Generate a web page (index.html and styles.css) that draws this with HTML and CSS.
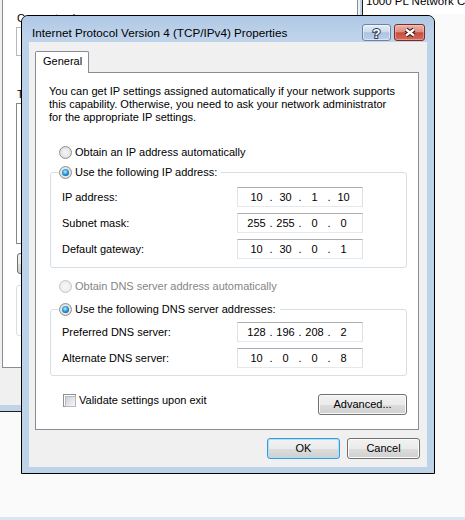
FILE: index.html
```html
<!DOCTYPE html>
<html>
<head>
<meta charset="utf-8">
<title>Internet Protocol Version 4 (TCP/IPv4) Properties</title>
<link rel="stylesheet" href="styles.css">
</head>
<body>
<div class="desktop">
  <div class="netwin"><span class="netwin-text">1000 PL Network Connection</span></div>

  <div class="bgwin">
    <div class="bg-client">
      <div class="bg-panel">
        <div class="bg-label bg-label-connect">Connect using:</div>
        <div class="bg-adapter"></div>
        <div class="bg-label bg-label-items">This connection uses the following items:</div>
        <div class="bg-list"></div>
        <div class="bg-buttons"><span class="bg-btn"></span></div>
        <div class="bg-desc"></div>
      </div>
    </div>
  </div>

  <div class="dialog">
    <div class="titlebar">
      <div class="title">Internet Protocol Version 4 (TCP/IPv4) Properties</div>
      <div class="tb-buttons">
        <span class="tb-btn tb-help">
          <svg width="13" height="14" viewBox="0 0 13 14"><text x="6.5" y="12" text-anchor="middle" font-family="Liberation Sans, sans-serif" font-weight="bold" font-size="13" fill="#ffffff" stroke="#2b3f5c" stroke-width="2" paint-order="stroke">?</text></svg>
        </span>
        <span class="tb-btn tb-close">
          <svg width="14" height="11" viewBox="0 0 14 11"><path d="M3 2.5 L11 8.5 M11 2.5 L3 8.5" stroke="#3a120d" stroke-width="4.6" fill="none"/><path d="M3 2.5 L11 8.5 M11 2.5 L3 8.5" stroke="#ffffff" stroke-width="2.2" fill="none"/></svg>
        </span>
      </div>
    </div>

    <div class="client">
      <div class="tab">General</div>
      <div class="panel">
        <div class="intro">You can get IP settings assigned automatically if your network supports<br>this capability. Otherwise, you need to ask your network administrator<br>for the appropriate IP settings.</div>

        <div class="option option-first"><span class="radio"></span><span class="option-text">Obtain an IP address automatically</span></div>

        <fieldset class="group group-ip">
          <legend class="group-legend"><span class="radio checked"></span><span class="option-text">Use the following IP address:</span></legend>
          <div class="group-body group-body-ip">
            <div class="field-row">
              <span class="field-label">IP address:</span>
              <span class="ipbox"><span class="oct">10</span><span class="dot">.</span><span class="oct">30</span><span class="dot">.</span><span class="oct">1</span><span class="dot">.</span><span class="oct">10</span></span>
            </div>
            <div class="field-row">
              <span class="field-label">Subnet mask:</span>
              <span class="ipbox"><span class="oct">255</span><span class="dot">.</span><span class="oct">255</span><span class="dot">.</span><span class="oct">0</span><span class="dot">.</span><span class="oct">0</span></span>
            </div>
            <div class="field-row">
              <span class="field-label">Default gateway:</span>
              <span class="ipbox"><span class="oct">10</span><span class="dot">.</span><span class="oct">30</span><span class="dot">.</span><span class="oct">0</span><span class="dot">.</span><span class="oct">1</span></span>
            </div>
          </div>
        </fieldset>

        <div class="option option-dns disabled"><span class="radio"></span><span class="option-text">Obtain DNS server address automatically</span></div>

        <fieldset class="group group-dns">
          <legend class="group-legend"><span class="radio checked"></span><span class="option-text">Use the following DNS server addresses:</span></legend>
          <div class="group-body group-body-dns">
            <div class="field-row">
              <span class="field-label">Preferred DNS server:</span>
              <span class="ipbox"><span class="oct">128</span><span class="dot">.</span><span class="oct">196</span><span class="dot">.</span><span class="oct">208</span><span class="dot">.</span><span class="oct">2</span></span>
            </div>
            <div class="field-row">
              <span class="field-label">Alternate DNS server:</span>
              <span class="ipbox"><span class="oct">10</span><span class="dot">.</span><span class="oct">0</span><span class="dot">.</span><span class="oct">0</span><span class="dot">.</span><span class="oct">8</span></span>
            </div>
          </div>
        </fieldset>

        <div class="check-row">
          <label class="check"><span class="checkbox"></span><span class="check-text">Validate settings upon exit</span></label>
          <span class="btn btn-advanced">Advanced...</span>
        </div>
      </div>

      <div class="dialog-buttons">
        <span class="btn btn-default">OK</span>
        <span class="btn">Cancel</span>
      </div>
    </div>
  </div>

  <div class="desktop-fill"></div>
  <div class="taskbar-edge"></div>
</div>
</body>
</html>
```

FILE: styles.css
```css
* { box-sizing: border-box; }

html, body {
  margin: 0;
  padding: 0;
}

body {
  font-family: "Liberation Sans", Arial, sans-serif;
  font-size: 11px;
  line-height: 13px;
  color: #000;
  background: #fafafa;
}

.desktop {
  position: relative;
  width: 465px;
  height: 520px;
  overflow: hidden;
  display: flex;
  flex-direction: column;
  background: #fafafa;
}

.desktop-fill { flex: 1; }

.taskbar-edge {
  height: 3px;
  background: #dae6f3;
}

/* window behind, top right */
.netwin {
  position: absolute;
  left: 363px;
  top: -30px;
  width: 110px;
  height: 44px;
  background: #ffffff;
  padding: 25px 0 0 3px;
  font-size: 11.5px;
  white-space: nowrap;
  z-index: 0;
}

/* background property window */
.bgwin {
  position: absolute;
  left: -20px;
  top: -40px;
  width: 383px;
  height: 452px;
  border: 1px solid #1e1e1e;
  background: #bfd4eb;
  padding: 0 2px 6px 7px;
  display: flex;
  flex-direction: column;
  z-index: 1;
}

.bg-client {
  flex: 1;
  background: #f0f0f0;
  padding: 0 2px 37px 14px;
  display: flex;
  flex-direction: column;
}

.bg-panel {
  flex: 1;
  background: #ffffff;
  border: 1px solid #898c95;
  padding: 0 12px 0 13px;
  display: flex;
  flex-direction: column;
}

.bg-label {
  padding-left: 1px;
  white-space: nowrap;
}

.bg-label-connect { margin-top: 50px; }

.bg-adapter {
  margin-top: 2px;
  height: 29px;
  border: 1px solid #b5b8be;
  background: #ffffff;
}

.bg-label-items { margin-top: 32px; }

.bg-list {
  margin-top: 2px;
  height: 141px;
  border: 1px solid #828790;
  background: #ffffff;
}

.bg-buttons {
  margin-top: 9px;
  height: 21px;
  display: flex;
}

.bg-btn {
  margin-left: 1px;
  width: 80px;
  height: 21px;
  border: 1px solid #707070;
  border-radius: 3px;
  background: linear-gradient(#f2f2f2 0%, #ebebeb 50%, #dddddd 51%, #cfcfcf 100%);
}

.bg-desc {
  margin-top: 11px;
  height: 51px;
  border: 1px solid #d5dfe5;
  border-radius: 3px;
}

/* dialog */
.dialog {
  position: absolute;
  left: 21px;
  top: 15px;
  width: 414px;
  height: 459px;
  border: 1px solid #000000;
  border-radius: 7px 7px 0 0;
  background: #bdd3ea;
  display: flex;
  flex-direction: column;
  overflow: hidden;
  z-index: 2;
}

.titlebar {
  height: 26px;
  flex: none;
  display: flex;
  align-items: flex-start;
  padding: 8px 9px 0 10px;
  background: linear-gradient(#afc7e4 0%, #bbd1ea 60%, #bfd4eb 100%);
  border-radius: 6px 6px 0 0;
}

.title {
  flex: 1;
  margin-top: 2px;
  font-size: 11.7px;
  line-height: 14px;
  white-space: nowrap;
}

.tb-buttons {
  display: flex;
  gap: 3px;
}

.tb-btn {
  height: 17px;
  border: 1px solid;
  border-radius: 3px;
  display: flex;
  align-items: center;
  justify-content: center;
}

.tb-help {
  width: 29px;
  border-color: #6c83a3;
  background: linear-gradient(#e4edf8 0%, #cddbec 45%, #aec3df 52%, #bcd0e8 100%);
  box-shadow: inset 0 0 0 1px rgba(255, 255, 255, 0.45);
}

.tb-close {
  width: 31px;
  border-color: #7a2c24;
  background: linear-gradient(#ebb5aa 0%, #de8d80 45%, #c84c3e 52%, #d26d5c 100%);
  box-shadow: inset 0 0 0 1px rgba(255, 220, 210, 0.4);
}

.tb-btn svg { display: block; }

.client {
  flex: 1;
  margin: 0 7px 6px;
  background: #f0f0f0;
  padding: 9px 7px 8px 6px;
  display: flex;
  flex-direction: column;
}

.tab {
  align-self: flex-start;
  position: relative;
  z-index: 1;
  width: 54px;
  height: 22px;
  margin-bottom: -1px;
  border: 1px solid #898c95;
  border-bottom: 0;
  border-radius: 2px 2px 0 0;
  background: #ffffff;
  padding: 3px 0 0 7px;
}

.panel {
  flex: 1;
  margin-right: 1px;
  border: 1px solid #898c95;
  background: #ffffff;
  padding: 12px 11px 14px 14px;
  display: flex;
  flex-direction: column;
}

.intro {
  margin-left: -1px;
  white-space: nowrap;
}

.option {
  display: flex;
  align-items: center;
  height: 13px;
  padding-left: 9px;
  white-space: nowrap;
}

.option-first { margin-top: 22px; }
.option-dns { margin-top: 12px; }

.option-text { margin-left: 3px; }

.disabled { color: #858585; }

.radio {
  width: 13px;
  height: 13px;
  flex: none;
  border-radius: 50%;
  border: 1px solid #8e8f8f;
  background: radial-gradient(circle at 50% 50%, #f6f6f6 0%, #e6e6e6 55%, #cfcfcf 100%);
  display: flex;
  align-items: center;
  justify-content: center;
}

.radio.checked::after {
  content: "";
  width: 7px;
  height: 7px;
  border-radius: 50%;
  background: radial-gradient(circle at 45% 40%, #c6f2ff 0%, #47b6ec 32%, #1a6cb2 68%, #163f6b 100%);
}

.disabled .radio {
  border-color: #c6c6c6;
  background: radial-gradient(circle at 50% 50%, #f8f8f8 0%, #eeeeee 60%, #e2e2e2 100%);
}

.group {
  margin: 0;
  padding: 0;
  min-width: 0;
  border: 1px solid #d5dfe5;
  border-radius: 3px;
}

.group-ip { margin-top: 7px; }
.group-dns { margin-top: 10px; }

.group-legend {
  display: flex;
  align-items: center;
  height: 13px;
  margin-left: 8px;
  padding: 0 4px 0 0;
  white-space: nowrap;
}

.group-body {
  display: flex;
  flex-direction: column;
  gap: 6px;
}

.group-body-ip { padding: 8px 0 8px 0; }
.group-body-dns { padding: 6px 0 7px 0; }

.field-row {
  display: flex;
  align-items: center;
  padding-left: 11px;
}

.field-label {
  width: 175px;
  flex: none;
  white-space: nowrap;
}

.ipbox {
  width: 126px;
  height: 20px;
  display: flex;
  align-items: center;
  padding-left: 8px;
  border: 1px solid;
  border-color: #abadb3 #dbdfe6 #e3e9ef #e2e3ea;
  background: #ffffff;
}

.oct {
  width: 21px;
  text-align: center;
}

.dot {
  width: 8px;
  text-align: center;
}

.check-row {
  margin-top: 18px;
  display: flex;
  justify-content: space-between;
  align-items: flex-start;
}

.check {
  display: flex;
  align-items: center;
  height: 13px;
  padding-left: 13px;
  white-space: nowrap;
}

.checkbox {
  width: 13px;
  height: 13px;
  flex: none;
  border: 1px solid #8e8f8f;
  background: #ffffff;
  padding: 1px;
}

.checkbox::after {
  content: "";
  display: block;
  width: 9px;
  height: 9px;
  border: 1px solid #b7bbc1;
  background: linear-gradient(135deg, #cdd1d7 0%, #e6e8eb 60%, #f6f6f6 100%);
}

.check-text { margin-left: 3px; }

.btn {
  width: 73px;
  height: 21px;
  border: 1px solid #707070;
  border-radius: 3px;
  background: linear-gradient(#f2f2f2 0%, #ebebeb 50%, #dddddd 51%, #cfcfcf 100%);
  box-shadow: inset 0 0 0 1px #fbfbfb;
  display: flex;
  align-items: center;
  justify-content: center;
  white-space: nowrap;
}

.btn-advanced { width: 89px; }

.btn-default {
  border-color: #3a9ad6;
  box-shadow: inset 0 0 0 1px #a8e2fb;
}

.dialog-buttons {
  margin-top: 8px;
  display: flex;
  justify-content: flex-end;
  gap: 7px;
}
```
